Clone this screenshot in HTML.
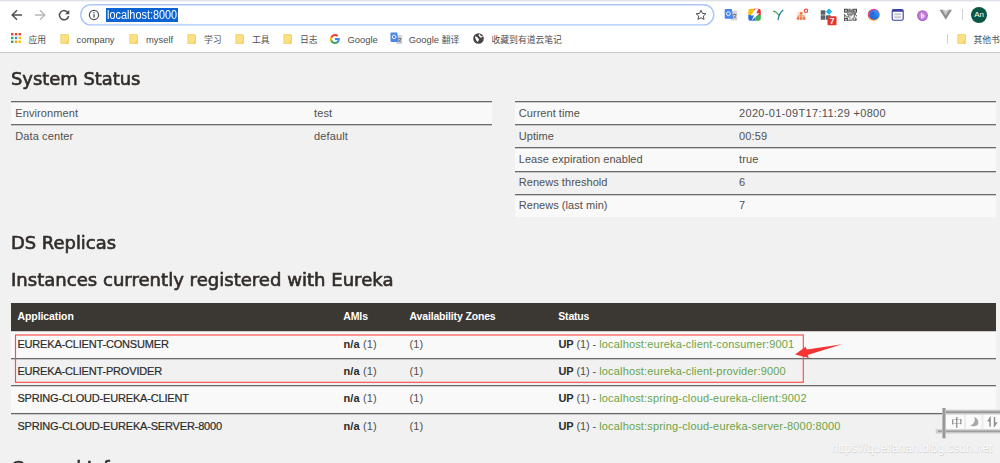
<!DOCTYPE html>
<html lang="zh">
<head>
<meta charset="utf-8">
<title>Eureka</title>
<style>
html,body{margin:0;padding:0;overflow:hidden;}
body{width:1000px;height:463px;overflow:hidden;position:relative;background:#f1f1f1;font-family:"Liberation Sans","Noto Sans CJK SC",sans-serif;color:#333;}
.abs{position:absolute;white-space:nowrap;}
#chrome{position:absolute;left:0;top:0;width:1000px;height:52px;background:#fff;border-bottom:1px solid #c9c9c9;box-sizing:content-box;}
#topstrip{position:absolute;left:0;top:0;width:1000px;height:2px;background:linear-gradient(#dee1e7 0,#dee1e7 50%,#f1f2f5 50%,#f6f7f9 100%);}
#sel{position:absolute;left:106px;top:7.500px;width:72.200px;height:14.700px;background:#0b64d2;}
#url{position:absolute;left:106.500px;top:8px;height:14px;line-height:14px;font-size:12.300px;color:#fff;transform:scaleX(0.884);transform-origin:0 0;}
.bm{position:absolute;top:33.500px;height:12px;line-height:12px;font-size:9.4px;color:#4e4e4e;white-space:nowrap;}
.bmc{font-size:8.8px;}
.folder{position:absolute;top:34px;width:9px;height:10px;}
h1{-webkit-text-stroke:0.6px #322d2a;letter-spacing:0;transform-origin:0 0;position:absolute;margin:0;font-family:"DejaVu Sans","Liberation Sans",sans-serif;font-weight:normal;font-size:17.200px;line-height:22px;color:#322d2a;white-space:nowrap;}
.tbl{position:absolute;}
.row{position:absolute;left:0;width:100%;box-sizing:border-box;border-top:1px solid #6a6a6a;box-shadow:inset 0 1px 0 rgba(90,90,90,0.28);font-size:11px;color:#505050;}
.row.odd{background:#f9f9f9;}
.row span{position:absolute;white-space:nowrap;}
.r23{height:23px;line-height:22px;}
.r27{height:27px;line-height:24px;}
.row span{letter-spacing:0.12px}
.row span.nm{color:#2b2b2b;letter-spacing:-0.18px;-webkit-text-stroke:0.2px #2b2b2b;}
.row span.pf{position:static;letter-spacing:-0.09px}
.row a{letter-spacing:0.17px}
.rt span:first-child{letter-spacing:0.04px}
.row span.dt{letter-spacing:0.32px}
#hdr{position:absolute;left:11px;top:302.500px;width:984.500px;height:28.500px;background:#3b3733;color:#fff;font-weight:bold;font-size:10.5px;line-height:27px;}
#hdr span{position:absolute;white-space:nowrap;letter-spacing:-0.08px}
a{color:#6aa448;text-decoration:none;}
b{color:#2b2b2b}
</style>
</head>
<body>
<div id="chrome">
  <div id="topstrip"></div>
  <!-- nav icons -->
  <svg class="abs" style="left:10px;top:8px" width="14" height="14" viewBox="0 0 14 14"><path d="M12 7H2.6M7 2.2L2.2 7l4.8 4.8" fill="none" stroke="#4d5156" stroke-width="1.5"/></svg>
  <svg class="abs" style="left:33px;top:8px" width="14" height="14" viewBox="0 0 14 14"><path d="M2 7h9.4M7 2.2L11.8 7 7 11.800" fill="none" stroke="#b5b8bc" stroke-width="1.4"/></svg>
  <svg class="abs" style="left:57px;top:8px" width="14" height="14" viewBox="0 0 14 14"><path d="M11.2 5.2A4.6 4.600 0 1 0 11.600 8" fill="none" stroke="#4d5156" stroke-width="1.5"/><path d="M12.300 2v4.200H8.100z" fill="#4d5156"/></svg>
  <svg class="abs" style="left:78px;top:2px" width="640" height="26" viewBox="0 0 640 26"><rect x="2.850" y="2.650" width="632.900" height="20.200" rx="10.100" fill="#fff" stroke="#a9c6f9" stroke-width="1.450"/></svg>
  <svg class="abs" style="left:88px;top:9px" width="12" height="12" viewBox="0 0 12 12"><circle cx="6" cy="5.900" r="4.600" fill="none" stroke="#505357" stroke-width="1.250"/><rect x="5.350" y="5.200" width="1.300" height="3.400" fill="#505357"/><rect x="5.350" y="3.100" width="1.300" height="1.300" fill="#505357"/></svg>
  <div id="sel"></div>
  <div id="url">localhost:8000</div>
  <!-- star -->
  <svg class="abs" style="left:695px;top:9px" width="12" height="12" viewBox="0 0 12 12"><path d="M6 1.200l1.450 3.200 3.450.35-2.600 2.300.75 3.400L6 8.700 2.950 10.450l.75-3.400-2.600-2.300 3.450-.35z" fill="none" stroke="#4d5156" stroke-width="1"/></svg>
  <!-- extension icons -->
  <svg class="abs" style="left:723px;top:8px" width="16" height="14" viewBox="723 8 16 14"><rect x="730.600" y="10.600" width="6.600" height="10" rx="0.800" fill="#d4d7dc"/><path d="M725.500 9h6.300l1.400 9.700h-7.700a.8.800 0 0 1-.8-.8v-8.100a.8.800 0 0 1 .8-.8z" fill="#4a86ee"/><circle cx="728.400" cy="13.700" r="1.900" fill="none" stroke="#fff" stroke-width="0.900"/><path d="M732.800 14.500h3.600M734.600 13.600v.9M733.300 18.200c1.400-.8 2.300-2 2.700-3.600M733.600 15.600c.5 1.200 1.400 2 2.700 2.600" stroke="#5a5d62" stroke-width="0.700" fill="none"/></svg>
  <svg class="abs" style="left:748px;top:8px" width="14" height="14" viewBox="748 8 14 14"><defs><clipPath id="rq"><rect x="748.300" y="8.700" width="12.500" height="12" rx="2.200"/></clipPath></defs><g clip-path="url(#rq)"><rect x="748" y="8" width="6.500" height="7" fill="#f4c20d"/><rect x="754" y="8" width="8" height="7" fill="#dc3a32"/><rect x="748" y="15" width="7.500" height="7" fill="#2b6fd6"/><rect x="755.500" y="15" width="6" height="7" fill="#3cb054"/><path d="M755.400 8.900h3.100l-2.300 4.300h3.300l-8 7.500 2.500-5.300h-3.300z" fill="#fff"/></g></svg>
  <svg class="abs" style="left:772px;top:8px" width="13" height="13" viewBox="772 8 13 13"><path d="M782.900 10.300c-2.600 2-4 5-4.800 9.200" fill="none" stroke="#1f7f8a" stroke-width="1.300" stroke-linecap="round"/><path d="M773.600 11.200c2 .5 3.800 1.700 5.200 4" fill="none" stroke="#2a9a8f" stroke-width="1.300" stroke-linecap="round"/><path d="M774.500 12.300c1.300.3 2.500 1 3.400 2" fill="none" stroke="#c8cf3a" stroke-width="0.700" stroke-linecap="round"/></svg>
  <svg class="abs" style="left:796px;top:7px" width="14" height="14" viewBox="796 7 14 14"><rect x="796.600" y="11.500" width="8.800" height="8.600" fill="#fbe9e2"/><rect x="799.700" y="12.100" width="2.700" height="2.500" fill="#f0703c"/><rect x="796.900" y="17.200" width="2.400" height="2.500" fill="#f0703c"/><rect x="799.900" y="17.200" width="2.400" height="2.500" fill="#f0703c"/><rect x="802.900" y="17.200" width="2.400" height="2.500" fill="#f0703c"/><path d="M801.050 14.600v2.600M798.100 17.200v-1.300h5.900v1.300" stroke="#f0703c" stroke-width="0.800" fill="none"/><circle cx="806" cy="10.800" r="1.700" fill="#fff" stroke="#ea4a3a" stroke-width="1.100"/></svg>
  <svg class="abs" style="left:819px;top:8px" width="19" height="19" viewBox="819 8 19 19"><rect x="820.700" y="10.200" width="4.700" height="4.500" rx="0.500" fill="#5c646c"/><rect x="820.700" y="15.300" width="4.700" height="4.500" rx="0.500" fill="#5c646c"/><rect x="826" y="15.300" width="4.700" height="4.500" rx="0.500" fill="#5c646c"/><rect x="826.700" y="9.400" width="4.600" height="4.600" rx="0.500" fill="#27b4e8" transform="rotate(45 829 11.700)"/><rect x="827.500" y="16.200" width="9" height="9" rx="1" fill="#e8362f"/><text x="829.700" y="23.900" font-family="Liberation Sans,sans-serif" font-size="8.500" font-weight="bold" fill="#fff">7</text></svg>
  <svg class="abs" style="left:844px;top:8px" width="13" height="13" viewBox="0 0 12 12"><g transform="translate(0,0.700)"><rect width="12" height="12" fill="#fff"/><g fill="#4a4a4a"><rect x="0" y="0" width="3.600" height="3.600"/><rect x="8.400" y="0" width="3.600" height="3.600"/><rect x="0" y="8.400" width="3.600" height="3.600"/><rect x="4" y="0" width="1" height="1"/><rect x="5" y="0" width="1" height="1"/><rect x="7" y="0" width="1" height="1"/><rect x="4" y="1" width="1" height="1"/><rect x="5" y="1" width="1" height="1"/><rect x="6" y="1" width="1" height="1"/><rect x="7" y="1" width="1" height="1"/><rect x="4" y="2" width="1" height="1"/><rect x="5" y="2" width="1" height="1"/><rect x="6" y="2" width="1" height="1"/><rect x="7" y="2" width="1" height="1"/><rect x="4" y="3" width="1" height="1"/><rect x="6" y="3" width="1" height="1"/><rect x="7" y="3" width="1" height="1"/><rect x="3" y="4" width="1" height="1"/><rect x="5" y="4" width="1" height="1"/><rect x="7" y="4" width="1" height="1"/><rect x="8" y="4" width="1" height="1"/><rect x="9" y="4" width="1" height="1"/><rect x="10" y="4" width="1" height="1"/><rect x="0" y="5" width="1" height="1"/><rect x="3" y="5" width="1" height="1"/><rect x="4" y="5" width="1" height="1"/><rect x="5" y="5" width="1" height="1"/><rect x="6" y="5" width="1" height="1"/><rect x="7" y="5" width="1" height="1"/><rect x="9" y="5" width="1" height="1"/><rect x="10" y="5" width="1" height="1"/><rect x="0" y="6" width="1" height="1"/><rect x="1" y="6" width="1" height="1"/><rect x="4" y="6" width="1" height="1"/><rect x="6" y="6" width="1" height="1"/><rect x="9" y="6" width="1" height="1"/><rect x="11" y="6" width="1" height="1"/><rect x="0" y="7" width="1" height="1"/><rect x="2" y="7" width="1" height="1"/><rect x="3" y="7" width="1" height="1"/><rect x="4" y="7" width="1" height="1"/><rect x="9" y="7" width="1" height="1"/><rect x="5" y="8" width="1" height="1"/><rect x="8" y="8" width="1" height="1"/><rect x="10" y="8" width="1" height="1"/><rect x="7" y="9" width="1" height="1"/><rect x="8" y="9" width="1" height="1"/><rect x="10" y="9" width="1" height="1"/><rect x="11" y="9" width="1" height="1"/><rect x="4" y="10" width="1" height="1"/><rect x="5" y="10" width="1" height="1"/><rect x="6" y="10" width="1" height="1"/><rect x="8" y="10" width="1" height="1"/><rect x="9" y="10" width="1" height="1"/><rect x="10" y="10" width="1" height="1"/><rect x="4" y="11" width="1" height="1"/><rect x="5" y="11" width="1" height="1"/><rect x="6" y="11" width="1" height="1"/><rect x="10" y="11" width="1" height="1"/><rect x="11" y="11" width="1" height="1"/></g><g fill="#cfcfcf"><rect x="1" y="1" width="1.600" height="1.600"/><rect x="9.400" y="1" width="1.600" height="1.600"/><rect x="1" y="9.400" width="1.600" height="1.600"/></g></g></svg>
  <svg class="abs" style="left:867px;top:8px" width="14" height="14" viewBox="867 8 14 14"><defs><linearGradient id="fr" x1="0" y1="0" x2="0.300" y2="1"><stop offset="0" stop-color="#d935b0"/><stop offset="0.550" stop-color="#ee4a6a"/><stop offset="1" stop-color="#f59a1c"/></linearGradient><linearGradient id="fb" x1="1" y1="0" x2="0" y2="1"><stop offset="0" stop-color="#3aa0f5"/><stop offset="1" stop-color="#1356d8"/></linearGradient></defs><circle cx="873.700" cy="14.850" r="6" fill="url(#fr)"/><circle cx="874.400" cy="14.900" r="4.900" fill="url(#fb)"/><path d="M872 12.500c1 .2 1.700.8 2 1.800" stroke="#0f48b8" stroke-width="0.800" fill="none"/></svg>
  <svg class="abs" style="left:891px;top:8px" width="14" height="14" viewBox="891 8 14 14"><rect x="892.200" y="9.500" width="11" height="10.700" rx="1.500" fill="#fff" stroke="#3b40a4" stroke-width="1.100"/><path d="M892.200 11.800v-.8a1.500 1.500 0 0 1 1.500-1.500h8a1.500 1.500 0 0 1 1.500 1.500v.8z" fill="#3b40a4"/><rect x="894.300" y="13.300" width="6.900" height="2" fill="#c6c6c6"/><rect x="894.300" y="16.300" width="6.900" height="2" fill="#c6c6c6"/></svg>
  <svg class="abs" style="left:916px;top:9px" width="13" height="13" viewBox="916 9 13 13"><defs><radialGradient id="pg" cx="0.500" cy="0.500" r="0.500"><stop offset="0" stop-color="#dcaee8"/><stop offset="0.600" stop-color="#c07fd4"/><stop offset="1" stop-color="#a95bc2"/></radialGradient></defs><circle cx="922.500" cy="15.600" r="5.400" fill="url(#pg)"/><path d="M921.600 12.800v5.600M921.600 15.400c2.400-1.300 3.700 1.800 0 2.800" stroke="#fff" stroke-width="0.900" fill="none"/></svg>
  <svg class="abs" style="left:938px;top:9px" width="16" height="12" viewBox="938 9 16 12"><path d="M939.500 9.800h3.100l3.150 5.500 3.150-5.500h3.100L945.750 19.800z" fill="#8f8f8f"/><path d="M942.600 9.800h2l1.150 2 1.150-2h2l-3.150 5.500z" fill="#c2c2c2"/></svg>
  <div class="abs" style="left:962px;top:9px;width:1px;height:11px;background:#cfd1d4"></div>
  <div class="abs" style="left:971.200px;top:6.900px;width:16px;height:16px;border-radius:50%;background:#0b5745;color:#fff;font-size:8px;line-height:16px;text-align:center;">An</div>

  <!-- bookmarks bar -->
  <svg class="abs" style="left:11px;top:33px" width="10" height="10" viewBox="0 0 10 10"><g><rect x="0" y="0" width="2.400" height="2.400" fill="#e8453c"/><rect x="3.800" y="0" width="2.400" height="2.400" fill="#e8453c"/><rect x="7.600" y="0" width="2.400" height="2.400" fill="#e8453c"/><rect x="0" y="3.800" width="2.400" height="2.400" fill="#34a853"/><rect x="3.800" y="3.800" width="2.400" height="2.400" fill="#4285f4"/><rect x="7.600" y="3.800" width="2.400" height="2.400" fill="#fbbc05"/><rect x="0" y="7.600" width="2.400" height="2.400" fill="#34a853"/><rect x="3.800" y="7.600" width="2.400" height="2.400" fill="#f29a0c"/><rect x="7.600" y="7.600" width="2.400" height="2.400" fill="#fbbc05"/></g></svg>
  <div class="bm bmc" style="left:28.500px">应用</div>
  <svg class="folder" style="left:59.500px" viewBox="0 0 9 10"><path d="M0.800 0.400h5.400l2.300 0.500v6.300l-1.500 0.300v2.200H1.300a.5.500 0 0 1-.5-.5z" fill="#fce084" stroke="#edc555" stroke-width="0.700"/><path d="M7 7.500h1.500V9.200a.5.500 0 0 1-.5.500H7z" fill="#f6d265" stroke="#edc555" stroke-width="0.500"/></svg>
  <div class="bm" style="left:76.500px">company</div>
  <svg class="folder" style="left:129px" viewBox="0 0 9 10"><path d="M0.800 0.400h5.400l2.300 0.500v6.300l-1.500 0.300v2.200H1.300a.5.500 0 0 1-.5-.5z" fill="#fce084" stroke="#edc555" stroke-width="0.700"/><path d="M7 7.500h1.500V9.200a.5.500 0 0 1-.5.500H7z" fill="#f6d265" stroke="#edc555" stroke-width="0.500"/></svg>
  <div class="bm" style="left:146px">myself</div>
  <svg class="folder" style="left:187px" viewBox="0 0 9 10"><path d="M0.800 0.400h5.400l2.300 0.500v6.300l-1.500 0.300v2.200H1.300a.5.500 0 0 1-.5-.5z" fill="#fce084" stroke="#edc555" stroke-width="0.700"/><path d="M7 7.500h1.500V9.200a.5.500 0 0 1-.5.500H7z" fill="#f6d265" stroke="#edc555" stroke-width="0.500"/></svg>
  <div class="bm bmc" style="left:204px">学习</div>
  <svg class="folder" style="left:235px" viewBox="0 0 9 10"><path d="M0.800 0.400h5.400l2.300 0.500v6.300l-1.500 0.300v2.200H1.300a.5.500 0 0 1-.5-.5z" fill="#fce084" stroke="#edc555" stroke-width="0.700"/><path d="M7 7.500h1.500V9.200a.5.500 0 0 1-.5.500H7z" fill="#f6d265" stroke="#edc555" stroke-width="0.500"/></svg>
  <div class="bm bmc" style="left:252px">工具</div>
  <svg class="folder" style="left:282.500px" viewBox="0 0 9 10"><path d="M0.800 0.400h5.400l2.300 0.500v6.300l-1.500 0.300v2.200H1.300a.5.500 0 0 1-.5-.5z" fill="#fce084" stroke="#edc555" stroke-width="0.700"/><path d="M7 7.500h1.500V9.200a.5.500 0 0 1-.5.500H7z" fill="#f6d265" stroke="#edc555" stroke-width="0.500"/></svg>
  <div class="bm bmc" style="left:300px">日志</div>
  <svg class="abs" style="left:330px;top:33.500px" width="10" height="10" viewBox="0 0 10 10"><path d="M9.800 5.100c0-.35-.03-.7-.09-1H5v1.900h2.700c-.12.620-.47 1.150-1 1.500v1.250h1.600C9.250 7.900 9.800 6.600 9.800 5.100z" fill="#4285f4"/><path d="M5 10c1.350 0 2.500-.45 3.300-1.200L6.700 7.500c-.45.300-1 .48-1.700.48-1.300 0-2.400-.88-2.800-2.060H.55v1.300C1.370 8.900 3.050 10 5 10z" fill="#34a853"/><path d="M2.200 5.950a3 3 0 0 1 0-1.900v-1.300H.55a5 5 0 0 0 0 4.500z" fill="#fbbc05"/><path d="M5 2c.74 0 1.400.25 1.900.75L8.350 1.300C7.500.5 6.350 0 5 0 3.050 0 1.370 1.120.55 2.750L2.200 4.050C2.600 2.870 3.700 2 5 2z" fill="#ea4335"/></svg>
  <div class="bm" style="left:347.500px">Google</div>
  <svg class="abs" style="left:389px;top:31px" width="15" height="15" viewBox="389 31 15 15"><rect x="396.200" y="35" width="6" height="9.300" rx="0.800" fill="#d4d7dc"/><path d="M391.300 32.400h5.900l1.300 9.500h-7.200a.8.800 0 0 1-.8-.8v-7.900a.8.800 0 0 1 .8-.8z" fill="#4a86ee"/><circle cx="394.100" cy="36.900" r="1.800" fill="none" stroke="#fff" stroke-width="0.900"/><path d="M398 38.600h3.400M399.700 37.700v.9M398.500 42.200c1.300-.8 2.100-1.900 2.500-3.500M398.800 39.700c.5 1.100 1.300 1.900 2.500 2.500" stroke="#5a5d62" stroke-width="0.700" fill="none"/></svg>
  <div class="bm" style="left:408.800px">Google <span class="bmc">翻译</span></div>
  <svg class="abs" style="left:473px;top:33px" width="11" height="11" viewBox="0 0 11 11"><circle cx="5.500" cy="5.500" r="5.300" fill="#454545"/><path d="M2 3.500c1-.3 2 .2 2.500 1s1.500 1 1.500 2-1 1.500-1.500 2.500c-.8-.5-1-1.500-1.500-2.500S1.800 4.500 2 3.500zM6.500 1c1 .5.500 1.500 1.500 2s1.500-.5 2 1c-1 0-1.500 1-2.500.5S6 3 5.500 2z" fill="#fff"/></svg>
  <div class="bm bmc" style="left:491.500px">收藏到有道云笔记</div>
  <div class="abs" style="left:947px;top:34px;width:1px;height:10px;background:#cfd1d4"></div>
  <svg class="folder" style="left:957px" viewBox="0 0 9 10"><path d="M0.800 0.400h5.400l2.300 0.500v6.300l-1.500 0.300v2.200H1.300a.5.500 0 0 1-.5-.5z" fill="#fce084" stroke="#edc555" stroke-width="0.700"/><path d="M7 7.500h1.500V9.200a.5.500 0 0 1-.5.500H7z" fill="#f6d265" stroke="#edc555" stroke-width="0.500"/></svg>
  <div class="bm bmc" style="left:973.500px">其他书签</div>
</div>

<h1 style="left:10.900px;top:68px;transform:scaleX(1.041)">System Status</h1>

<div class="tbl" style="left:11px;top:101px;width:480.500px;height:47px">
  <div class="row odd r23" style="top:0"><span style="left:4.200px">Environment</span><span style="left:303px">test</span></div>
  <div class="row r23" style="top:23px"><span style="left:4.200px">Data center</span><span style="left:303px">default</span></div>
</div>

<div class="tbl rt" style="left:515px;top:101px;width:480.500px;height:116px">
  <div class="row odd r23" style="top:0"><span style="left:3.800px">Current time</span><span class="dt" style="left:224px">2020-01-09T17:11:29 +0800</span></div>
  <div class="row r23" style="top:23px"><span style="left:3.800px">Uptime</span><span style="left:224px">00:59</span></div>
  <div class="row odd r23" style="top:46px;height:24px"><span style="left:3.800px">Lease expiration enabled</span><span style="left:224px">true</span></div>
  <div class="row r23" style="top:70px;height:23px;line-height:20px"><span style="left:3.800px">Renews threshold</span><span style="left:224px">6</span></div>
  <div class="row odd r23" style="top:93px;line-height:20px"><span style="left:3.800px">Renews (last min)</span><span style="left:224px">7</span></div>
</div>

<h1 style="left:10.900px;top:232px;transform:scaleX(1.042)">DS Replicas</h1>
<h1 style="left:10.900px;top:269px;transform:scaleX(1.051)">Instances currently registered with Eureka</h1>

<div id="hdr"><span style="left:6.500px">Application</span><span style="left:332.200px">AMIs</span><span style="left:398.500px;letter-spacing:-0.16px">Availability Zones</span><span style="left:547.300px;letter-spacing:-0.2px">Status</span></div>

<div class="tbl" style="left:11px;top:331px;width:984.500px;height:110px">
  <div class="row odd r27" style="top:0;border-top:0;line-height:26px"><span class="nm" style="left:6.400px">EUREKA-CLIENT-CONSUMER</span><span style="left:332.500px"><b>n/a</b> (1)</span><span style="left:398.500px">(1)</span><span style="left:547.400px"><span class="pf"><b>UP</b> (1) - </span><a>localhost:eureka-client-consumer:9001</a></span></div>
  <div class="row r27" style="top:27px"><span class="nm" style="left:6.400px">EUREKA-CLIENT-PROVIDER</span><span style="left:332.500px"><b>n/a</b> (1)</span><span style="left:398.500px">(1)</span><span style="left:547.400px"><span class="pf"><b>UP</b> (1) - </span><a>localhost:eureka-client-provider:9000</a></span></div>
  <div class="row odd r27" style="top:54px"><span class="nm" style="left:6.400px">SPRING-CLOUD-EUREKA-CLIENT</span><span style="left:332.500px"><b>n/a</b> (1)</span><span style="left:398.500px">(1)</span><span style="left:547.400px"><span class="pf"><b>UP</b> (1) - </span><a>localhost:spring-cloud-eureka-client:9002</a></span></div>
  <div class="row r27" style="top:82px"><span class="nm" style="left:6.400px">SPRING-CLOUD-EUREKA-SERVER-8000</span><span style="left:332.500px"><b>n/a</b> (1)</span><span style="left:398.500px">(1)</span><span style="left:547.400px"><span class="pf"><b>UP</b> (1) - </span><a>localhost:spring-cloud-eureka-server-8000:8000</a></span></div>
</div>

<h1 style="left:10.900px;top:457px;transform:scaleX(1.036)">General Info</h1>

<!-- red annotation box and arrow -->
<svg class="abs" style="left:0;top:0" width="1000" height="463" viewBox="0 0 1000 463"><rect x="15.500" y="335" width="787.800" height="47.300" fill="none" stroke="#f84c4c" stroke-width="1.150"/><path d="M795.100 354.600L805.500 346.800L806.800 349.400L842.200 344.300L807.600 355L808.900 358.100Z" fill="#f53434"/></svg>

<!-- IME widget and watermark -->
<svg class="abs" style="left:930px;top:404px" width="70" height="38" viewBox="930 404 70 38"><defs><filter id="sb" x="-10%" y="-10%" width="120%" height="120%"><feGaussianBlur stdDeviation="0.400"/></filter><filter id="sc" x="-10%" y="-10%" width="120%" height="120%"><feGaussianBlur stdDeviation="0.250"/></filter></defs><g filter="url(#sb)">
  <rect x="945" y="413" width="55" height="18" fill="#fbfbfb"/>
  <rect x="964" y="414.500" width="2" height="15" fill="#ececec"/><rect x="981.500" y="414.500" width="2" height="15" fill="#ececec"/>
  <rect x="942" y="409.700" width="58" height="4.900" fill="#cacaca"/>
  <rect x="942" y="411.300" width="58" height="1.700" fill="#969696"/>
  <rect x="935.700" y="429.200" width="64.300" height="4.300" fill="#cdcdcd"/>
  <rect x="938" y="430.500" width="62" height="1.600" fill="#9e9e9e"/>
  <rect x="942" y="408" width="3.900" height="30.400" fill="#bebebe"/>
  <rect x="943.100" y="408" width="1.700" height="30" fill="#929292"/>
  </g>
  <g filter="url(#sc)">
  <text x="951.300" y="426.500" font-family="Noto Serif CJK SC,Noto Sans CJK SC,serif" font-size="11.300" fill="#4c4c4c">中</text>
  <path d="M974.400 417c3.200 1.200 4.800 4.200 3.600 7.400-1 1.700-4.800 2.300-8.400 1.200 3.600-.8 6.200-3.900 4.800-8.600z" fill="#a8a8a8"/>
  <path d="M990.400 416.300l-3.300 5.300h2.300v5.200h1.400v-10.500zM994.200 427.500l3.400-5.300h-2.400v-5.300h-1.400v10.600z" fill="#8e8e8e"/>
  </g>
</svg>
<div class="abs" style="left:831.500px;top:440.700px;font-size:12.200px;letter-spacing:-0.150px;line-height:14px;color:#fdfdfd;text-shadow:0.500px 0.500px 0.800px #cfcfcf, -0.300px -0.300px 0.600px #dedede;">https://quellanan.blog.csdn.net</div>
</body>
</html>
